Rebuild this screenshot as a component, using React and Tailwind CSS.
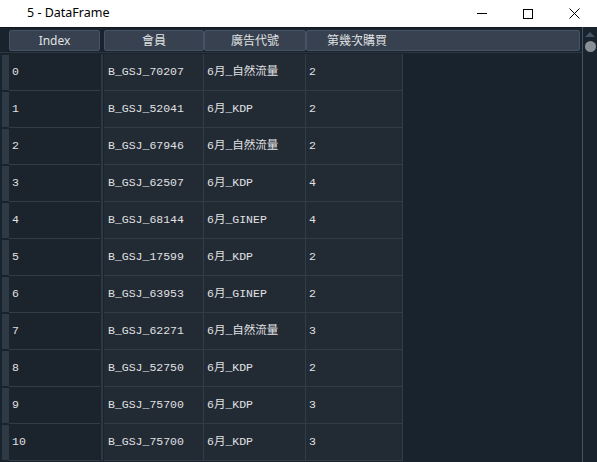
import React from 'react'

const rows = [
  ['0', 'B_GSJ_70207', '6月_自然流量', '2'],
  ['1', 'B_GSJ_52041', '6月_KDP', '2'],
  ['2', 'B_GSJ_67946', '6月_自然流量', '2'],
  ['3', 'B_GSJ_62507', '6月_KDP', '4'],
  ['4', 'B_GSJ_68144', '6月_GINEP', '4'],
  ['5', 'B_GSJ_17599', '6月_KDP', '2'],
  ['6', 'B_GSJ_63953', '6月_GINEP', '2'],
  ['7', 'B_GSJ_62271', '6月_自然流量', '3'],
  ['8', 'B_GSJ_52750', '6月_KDP', '2'],
  ['9', 'B_GSJ_75700', '6月_KDP', '3'],
  ['10', 'B_GSJ_75700', '6月_KDP', '3'],
]

const mono = { fontFamily: '"Liberation Mono", "Noto Sans CJK TC", monospace' }
const sans = { fontFamily: '"Noto Sans", "Noto Sans CJK TC", sans-serif' }

function TitleBar() {
  return (
    <div className="h-[27px] bg-white flex items-center text-black" style={sans}>
      <span className="pl-[27px] text-[12.5px] flex-1">5 - DataFrame</span>
      <div className="flex items-center h-full">
        <div className="w-[46px] h-full flex items-center justify-center">
          <div className="w-[10px] h-px bg-black" />
        </div>
        <div className="w-[46px] h-full flex items-center justify-center">
          <div className="w-[10px] h-[10px] border border-black" />
        </div>
        <div className="w-[46px] h-full flex items-center justify-center">
          <svg width="11" height="11" viewBox="0 0 11 11">
            <path d="M0.5 0.5 L10.5 10.5 M10.5 0.5 L0.5 10.5" stroke="black" strokeWidth="1" />
          </svg>
        </div>
      </div>
    </div>
  )
}

function HeaderCell({ children, className }) {
  return (
    <div className={`h-[21px] bg-[#37414f] border border-[#455364] rounded-[2px] text-[12px] text-[#e0e1e3] flex items-center ${className}`} style={sans}>
      {children}
    </div>
  )
}

function Row({ r }) {
  return (
    <div className="flex h-[37px]">
      <div className="w-[9px] flex py-px">
        <div className="ml-[2px] w-[7px] bg-[#2e3a45]" />
      </div>
      <div className="w-[91px] bg-[#1b232c] border-b border-[#323c47] flex items-center pl-[3px] text-[11.5px] text-[#e0e1e3]" style={mono}>
        {r[0]}
      </div>
      <div className="w-[4px] flex justify-center">
        <div className="w-[2px] bg-[#2e3843]" />
      </div>
      <div className="w-[100px] bg-[#222a34] border-b border-r border-[#323c47] flex items-center pl-[4px] text-[11.5px] text-[#e0e1e3]" style={mono}>
        {r[1]}
      </div>
      <div className="w-[102px] bg-[#222a34] border-b border-r border-[#323c47] flex items-center pl-[3px] text-[11.5px] text-[#e0e1e3]" style={mono}>
        {r[2]}
      </div>
      <div className="w-[97px] bg-[#222a34] border-b border-r border-[#323c47] flex items-center pl-[3px] text-[11.5px] text-[#e0e1e3]" style={mono}>
        {r[3]}
      </div>
    </div>
  )
}

export default function App() {
  return (
    <div className="w-[597px] h-[462px] overflow-hidden bg-[#19232d]">
      <TitleBar />
      <div className="flex h-[435px]">
        <div className="flex-1 flex flex-col overflow-hidden">
          <div className="flex pt-[2px] h-[26px] border-t border-[#10161d] border-b border-b-[#2c3640]">
            <div className="w-[9px]" />
            <HeaderCell className="w-[91px] justify-center">Index</HeaderCell>
            <div className="w-[4px]" />
            <HeaderCell className="w-[100px] justify-center">會員</HeaderCell>
            <HeaderCell className="w-[102px] justify-center">廣告代號</HeaderCell>
            <HeaderCell className="flex-1 pl-[20px] mr-[2px]">第幾次購買</HeaderCell>
          </div>
          <div className="flex flex-col pt-px">
            {rows.map((r) => (
              <Row key={r[0]} r={r} />
            ))}
          </div>
        </div>
        <div className="w-[15px] border-l border-[#455364] flex flex-col items-center pt-[5px]">
          <div className="w-0 h-0 border-l-[5px] border-r-[5px] border-b-[5px] border-l-transparent border-r-transparent border-b-[#455364]" />
          <div className="mt-[4px] w-[11px] h-[11px] rounded-full bg-[#8a8f95]" />
        </div>
      </div>
    </div>
  )
}
